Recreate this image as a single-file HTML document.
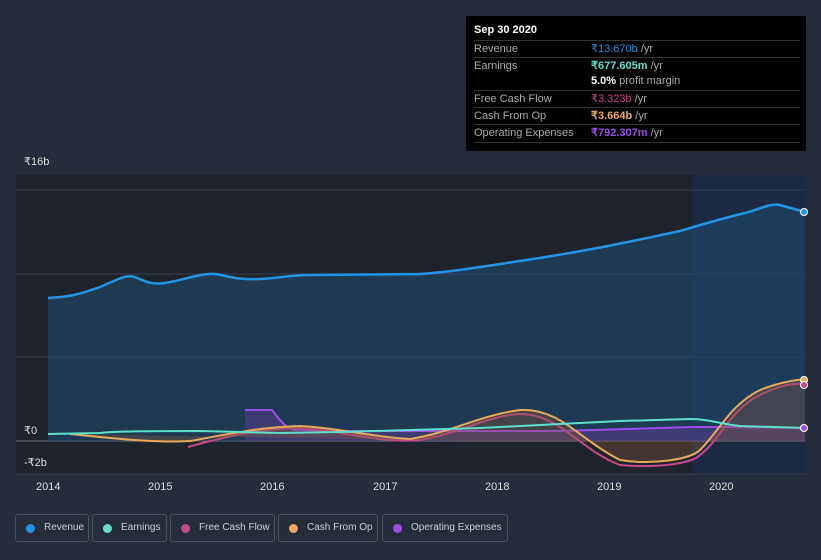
<!DOCTYPE html>
<html><head><style>
body{margin:0;background:#262d3a;font-family:"Liberation Sans",sans-serif;width:821px;height:560px;overflow:hidden;position:relative}
.tt{position:absolute;left:466px;top:16px;width:340px;height:135px;background:#000;border-radius:2px}
.tt .h{position:absolute;left:8px;top:8px;color:#fff;font-weight:bold;font-size:11px}
.row{position:absolute;left:8px;width:326px;height:17px;border-top:1px solid #333;font-size:11px;color:#aaa;line-height:16px;white-space:nowrap}
.row .v{position:absolute;left:117px}
.leg{position:absolute;top:514px;height:28px;border:1px solid #4a505c;border-radius:3px;color:#c8ccd2;font-size:10px;line-height:26px;box-sizing:border-box;white-space:nowrap}
.leg i{position:absolute;left:10px;top:9px;width:9px;height:9px;border-radius:50%}
.leg span{position:absolute;left:28px}
.ax{position:absolute;color:#ddd;font-size:11px}
</style></head><body>
<svg width="821" height="560" style="position:absolute;left:0;top:0">
<rect x="16" y="175" width="676" height="299" fill="#1e232c"/>
<rect x="692" y="175" width="113" height="299" fill="#1b2a42"/>
<g stroke="#3a404c" stroke-width="1">
<line x1="16" y1="190" x2="805" y2="190"/><line x1="16" y1="274" x2="805" y2="274"/><line x1="16" y1="357" x2="805" y2="357"/><line x1="16" y1="474" x2="805" y2="474"/>
</g>
<line x1="16" y1="441" x2="805" y2="441" stroke="#777" stroke-width="1"/>
<path d="M48,298 C70,297 80,294 100,287 C115,281 125,274 135,277 C145,281 150,285 165,283 C180,281 200,273 215,274 C230,276 235,280 260,279 C280,278 290,275 310,275 L420,274 C450,272 480,267 520,261 C580,252 620,244 680,231 C700,225 720,219 745,213 C760,209 770,203 780,205 L805,212 L805,441 L48,441Z" fill="#1e4a6e" fill-opacity="0.6"/>
<path d="M48,298 C70,297 80,294 100,287 C115,281 125,274 135,277 C145,281 150,285 165,283 C180,281 200,273 215,274 C230,276 235,280 260,279 C280,278 290,275 310,275 L420,274 C450,272 480,267 520,261 C580,252 620,244 680,231 C700,225 720,219 745,213 C760,209 770,203 780,205 L805,212" fill="none" stroke="#2394e4" stroke-width="2.5"/>
<path d="M245,410 L272,410 C280,420 285,428 295,430 L350,431 L560,431 L692,427 L805,428 L805,441 L245,441Z" fill="#6b3fa0" fill-opacity="0.4"/>
<path d="M245,410 L272,410 C280,420 285,428 295,430 L350,431 L560,431 L692,427 L740,427 L805,428" fill="none" stroke="#9b4de8" stroke-width="2"/>
<path d="M188,447 C220,438 260,428 300,428 C340,430 380,444 420,440 C460,433 490,415 520,414 C560,414 580,450 620,465 C650,468 690,465 700,455 C720,440 730,410 760,395 C780,385 795,383 805,384" fill="none" stroke="#c34a86" stroke-width="2"/>
<path d="M70,434 C110,438 150,443 190,441 C230,434 260,427 300,426 C340,428 370,437 410,439 C450,433 480,415 520,410 C560,408 580,440 620,460 C650,465 690,460 700,450 C720,430 730,405 760,390 C780,382 795,380 805,379 L805,441 L470,441Z" fill="#8a5a3a" fill-opacity="0.35"/>
<path d="M70,434 C110,438 150,443 190,441 C230,434 260,427 300,426 C340,428 370,437 410,439 C450,433 480,415 520,410 C560,408 580,440 620,460 C650,465 690,460 700,450 C720,430 730,405 760,390 C780,382 795,380 805,379" fill="none" stroke="#e8a95a" stroke-width="2"/>
<path d="M48,434 L100,433 C120,431 160,431 200,431 L280,433 L340,432 L480,428 L560,424 L620,421 L690,419 C710,419 720,424 740,426 L805,428" fill="none" stroke="#5ee0cc" stroke-width="2"/>
<circle cx="804" cy="212" r="3.5" fill="#2394e4" stroke="#fff" stroke-width="1"/>
<circle cx="804" cy="380" r="3.5" fill="#e8a95a" stroke="#fff" stroke-width="1"/>
<circle cx="804" cy="385" r="3.5" fill="#c34a86" stroke="#fff" stroke-width="1"/>
<circle cx="804" cy="428" r="3.5" fill="#9b4de8" stroke="#fff" stroke-width="1"/>
</svg>
<div class="ax" style="left:24px;top:155px">₹16b</div>
<div class="ax" style="left:24px;top:424px">₹0</div>
<div class="ax" style="left:24px;top:456px">-₹2b</div>
<div class="ax" style="left:36px;top:481px">2014</div>
<div class="ax" style="left:148px;top:481px">2015</div>
<div class="ax" style="left:260px;top:481px">2016</div>
<div class="ax" style="left:373px;top:481px">2017</div>
<div class="ax" style="left:485px;top:481px">2018</div>
<div class="ax" style="left:597px;top:481px">2019</div>
<div class="ax" style="left:709px;top:481px">2020</div>
<div class="tt">
<div class="h">Sep 30 2020</div>
<div class="row" style="top:24px">Revenue<span class="v"><b style="font-weight:normal;color:#2394e4">₹13.670b</b> /yr</span></div>
<div class="row" style="top:41px">Earnings<span class="v"><b style="color:#5ee0cc">₹677.605m</b> /yr</span></div>
<div class="row" style="top:57px;border-top:none"><span class="v"><b style="color:#fff">5.0%</b> profit margin</span></div>
<div class="row" style="top:74px">Free Cash Flow<span class="v"><b style="font-weight:normal;color:#c34a86">₹3.323b</b> /yr</span></div>
<div class="row" style="top:91px">Cash From Op<span class="v"><b style="color:#e8a95a">₹3.664b</b> /yr</span></div>
<div class="row" style="top:108px;border-bottom:1px solid #333">Operating Expenses<span class="v"><b style="color:#9b4de8">₹792.307m</b> /yr</span></div>
</div>
<div class="leg" style="left:15px;width:74px"><i style="background:#2394e4"></i><span>Revenue</span></div>
<div class="leg" style="left:92px;width:75px"><i style="background:#5ee0cc"></i><span>Earnings</span></div>
<div class="leg" style="left:170px;width:105px"><i style="background:#c34a86"></i><span>Free Cash Flow</span></div>
<div class="leg" style="left:278px;width:100px"><i style="background:#e8a95a"></i><span>Cash From Op</span></div>
<div class="leg" style="left:382px;width:126px"><i style="background:#9b4de8"></i><span>Operating Expenses</span></div>
</body></html>
